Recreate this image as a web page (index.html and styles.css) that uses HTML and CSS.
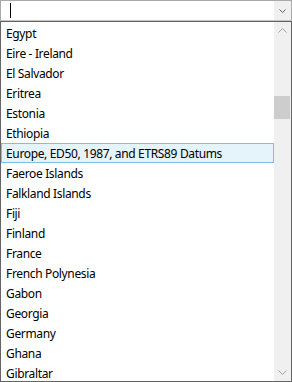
FILE: index.html
```html
<!DOCTYPE html>
<html>
	<head>
		<meta charset="UTF-8">
		<title></title>
		<link rel="stylesheet" href="styles.css">
	</head>
	<body>
		<div class="combo">
			<div class="edit"><span class="caret"></span></div>
			<div class="drop">
				<svg width="7" height="4" viewBox="0 0 7 4"><path d="M0.5 0.5 L3.5 3.5 L6.5 0.5" fill="none" stroke="#606060" stroke-width="1"/></svg>
			</div>
		</div>

		<div class="list">
			<ul class="items">
				<li>Egypt</li>
				<li>Eire - Ireland</li>
				<li>El Salvador</li>
				<li>Eritrea</li>
				<li>Estonia</li>
				<li>Ethiopia</li>
				<li class="hot">Europe, ED50, 1987, and ETRS89 Datums</li>
				<li>Faeroe Islands</li>
				<li>Falkland Islands</li>
				<li>Fiji</li>
				<li>Finland</li>
				<li>France</li>
				<li>French Polynesia</li>
				<li>Gabon</li>
				<li>Georgia</li>
				<li>Germany</li>
				<li>Ghana</li>
				<li>Gibraltar</li>
			</ul>
			<div class="scroll">
				<div class="arrow">
					<svg width="9" height="5" viewBox="0 0 9 5"><path d="M0.5 4.5 L4.5 0.5 L8.5 4.5" fill="none" stroke="#a3a3a3" stroke-width="1"/></svg>
				</div>
				<div class="track">
					<div class="thumb"></div>
				</div>
				<div class="arrow">
					<svg width="9" height="5" viewBox="0 0 9 5"><path d="M0.5 0.5 L4.5 4.5 L8.5 0.5" fill="none" stroke="#a3a3a3" stroke-width="1"/></svg>
				</div>
			</div>
		</div>
	</body>
</html>
```
FILE: styles.css
```css
*{
	margin: 0;
	padding: 0;
	box-sizing: border-box;
}
body{
	width: 292px;
	height: 382px;
	overflow: hidden;
	background: #fff;
	font-family: "Noto Sans", "Open Sans", sans-serif;
	font-size: 12px;
	letter-spacing: -0.35px;
	color: #000;
}
.combo{
	display: flex;
	height: 21px;
	border: 1px solid #a9a9a9;
	border-bottom-color: #c4c4c4;
}
.edit{
	flex: 1;
	padding: 2px 0 0 9px;
}
.caret{
	display: block;
	width: 1px;
	height: 15px;
	background: #000;
}
.drop{
	width: 17px;
	background: #f0f0f0;
	display: flex;
	align-items: center;
	justify-content: center;
	padding-top: 1px;
}
.list{
	display: flex;
	height: 361px;
	border: 1px solid #646464;
	overflow: hidden;
}
.items{
	flex: 1;
	list-style: none;
	padding-top: 1px;
}
.items li{
	height: 20px;
	line-height: 19px;
	padding-left: 4px;
	border: 1px solid transparent;
	white-space: nowrap;
}
.items li.hot{
	background: #e5f3fb;
	border-color: #7ac0e8;
}
.scroll{
	width: 17px;
	background: #f0f0f0;
	display: flex;
	flex-direction: column;
}
.arrow{
	height: 17px;
	display: flex;
	align-items: center;
	justify-content: center;
}
.track{
	flex: 1;
	padding-top: 57px;
}
.thumb{
	height: 23px;
	margin: 0 1px 0 0;
	background: #cdcdcd;
}
```
